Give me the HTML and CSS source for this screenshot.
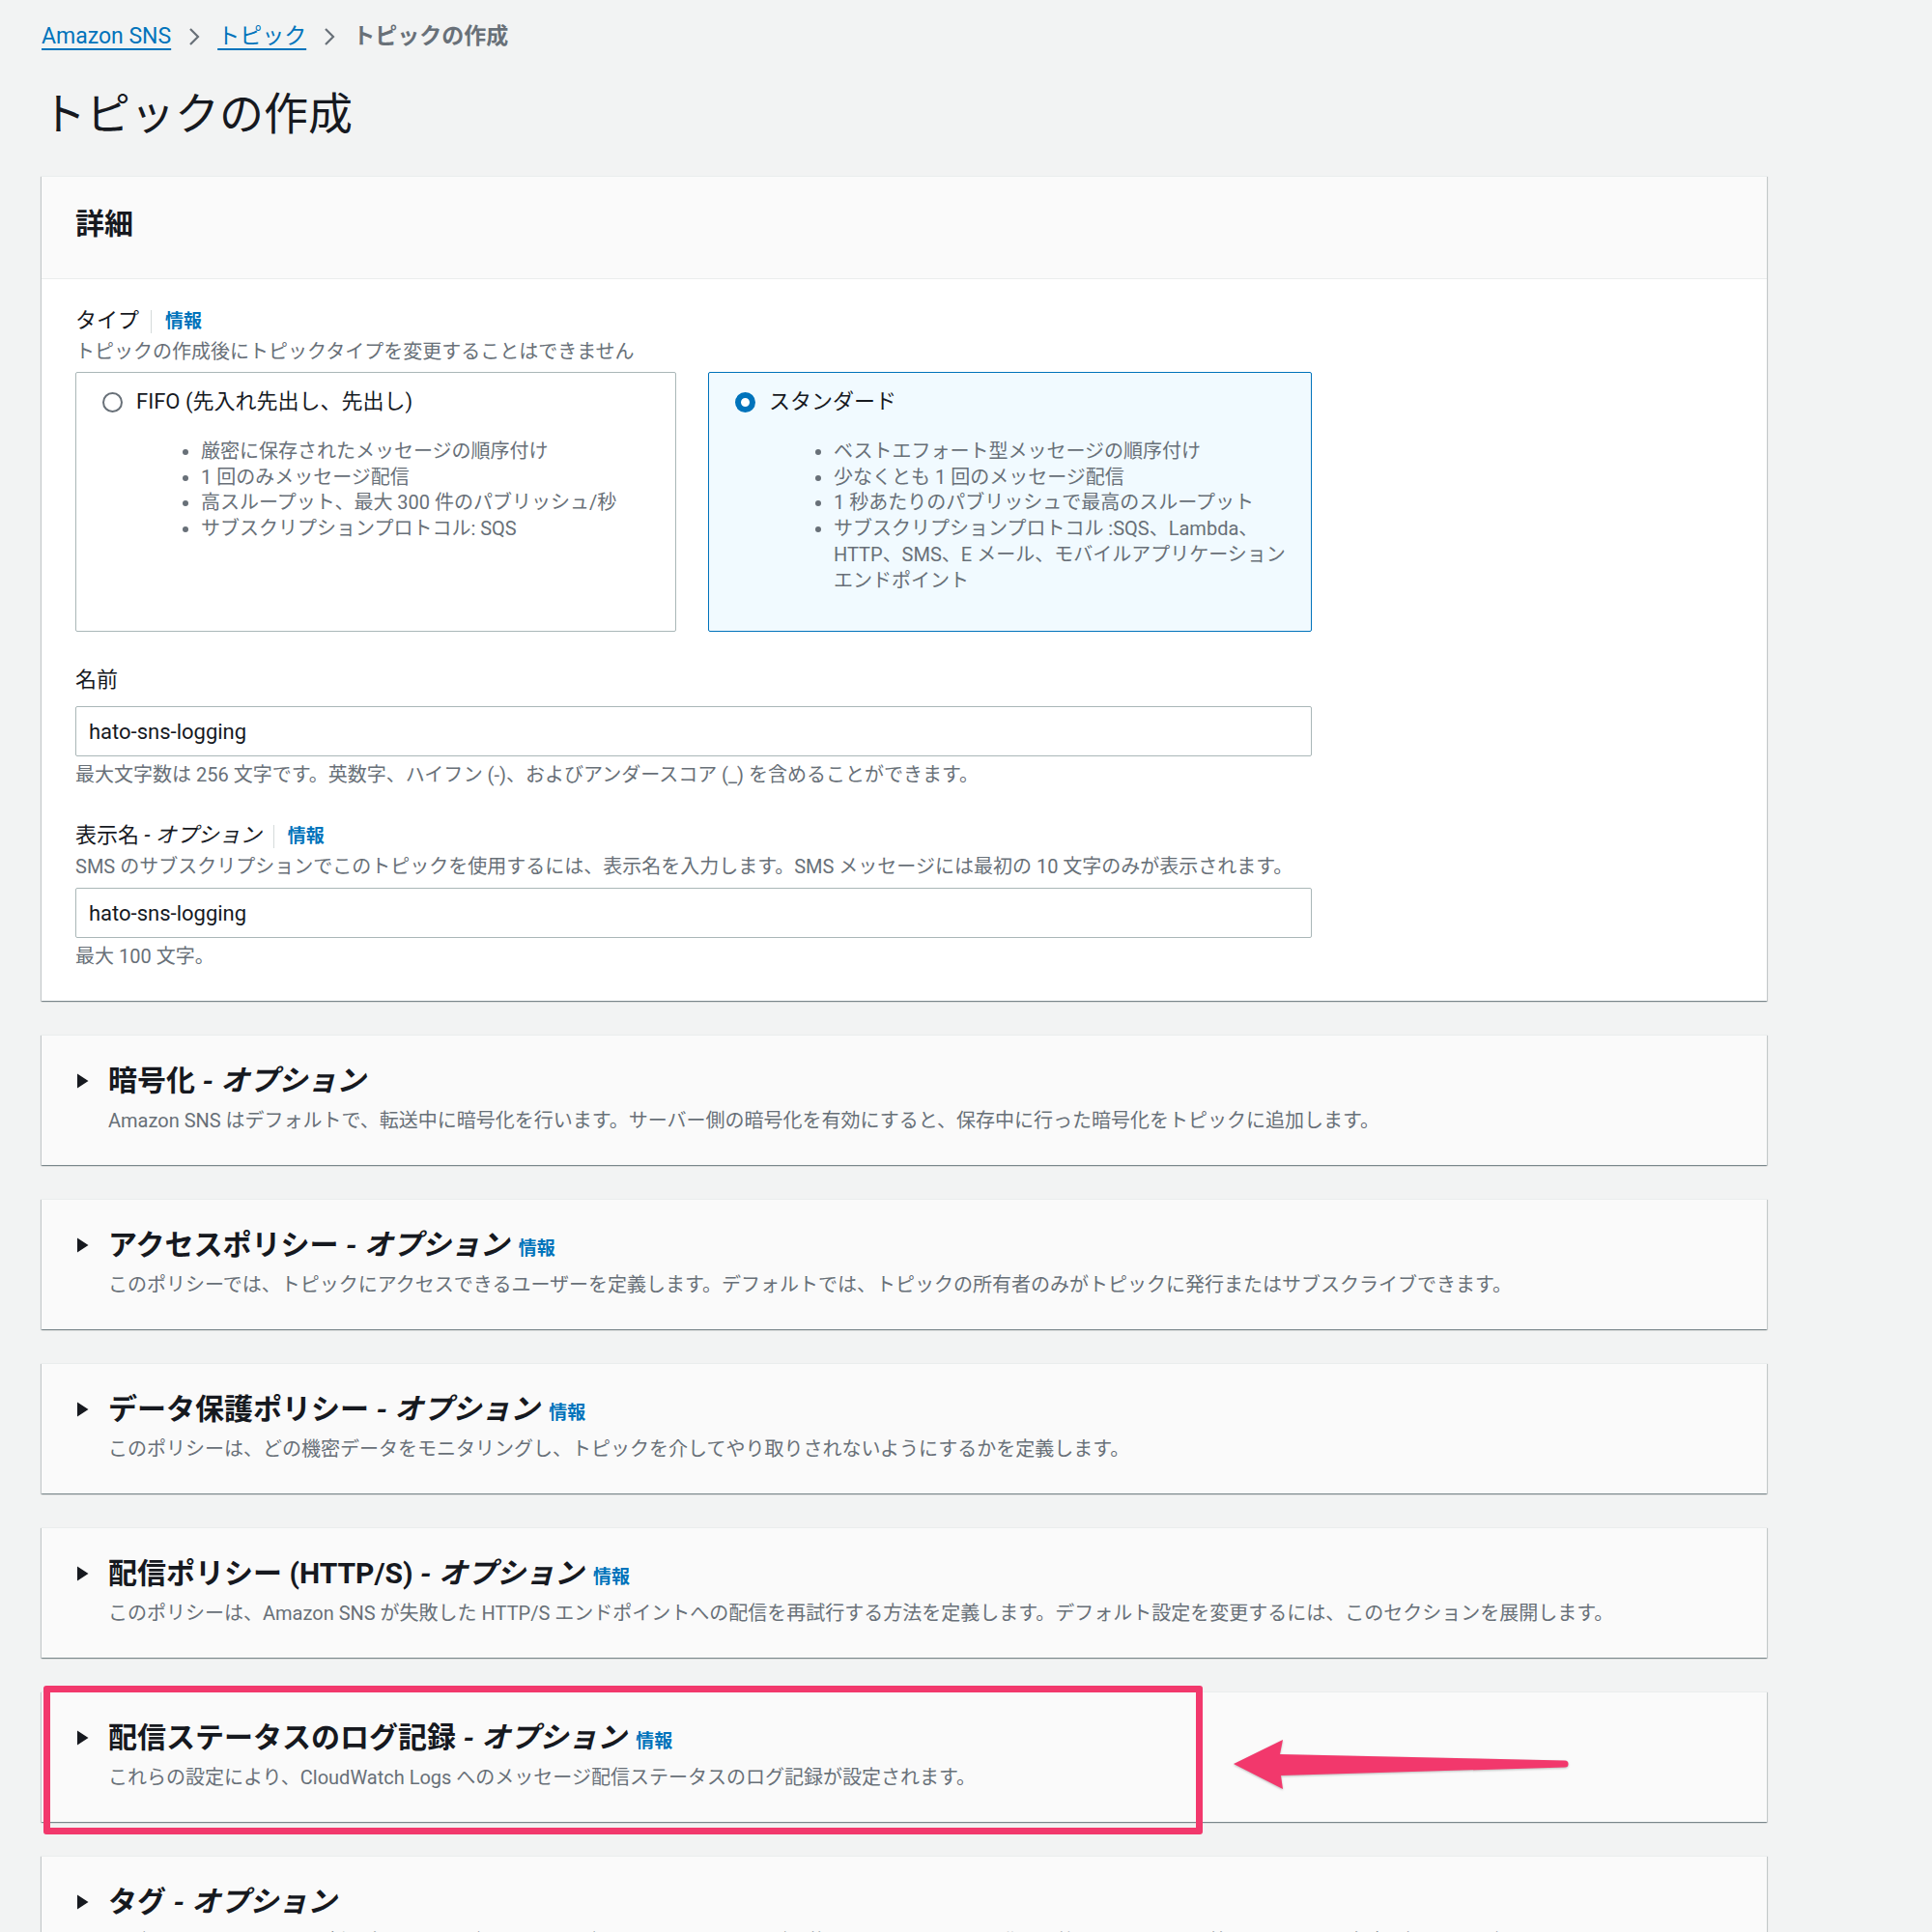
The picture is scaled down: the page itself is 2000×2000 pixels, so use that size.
FILE: index.html
```html
<!DOCTYPE html>
<html lang="ja">
<head>
<meta charset="utf-8">
<title>トピックの作成</title>
<link rel="stylesheet" href="styles.css">
</head>
<body>
<div class="page">
  <nav class="crumbs">
    <a class="crumb-link" href="#">Amazon SNS</a>
    <svg class="chev" width="12" height="20" viewBox="0 0 12 20"><polyline points="2,2 10,10 2,18" fill="none" stroke="#687078" stroke-width="2.2"/></svg>
    <a class="crumb-link" href="#">トピック</a>
    <svg class="chev" width="12" height="20" viewBox="0 0 12 20"><polyline points="2,2 10,10 2,18" fill="none" stroke="#687078" stroke-width="2.2"/></svg>
    <span class="crumb-current">トピックの作成</span>
  </nav>

  <h1 class="page-title">トピックの作成</h1>

  <section class="panel">
    <header class="panel-head"><h2>詳細</h2></header>
    <div class="panel-body">
      <div class="label-row"><span class="label">タイプ</span><a class="info" href="#">情報</a></div>
      <div class="desc">トピックの作成後にトピックタイプを変更することはできません</div>
      <div class="tiles">
        <div class="tile">
          <div class="tile-head"><span class="radio"></span><span class="tile-title">FIFO (先入れ先出し、先出し)</span></div>
          <ul class="tile-list">
            <li>厳密に保存されたメッセージの順序付け</li>
            <li>1 回のみメッセージ配信</li>
            <li>高スループット、最大 300 件のパブリッシュ/秒</li>
            <li>サブスクリプションプロトコル: SQS</li>
          </ul>
        </div>
        <div class="tile tile-selected">
          <div class="tile-head"><span class="radio radio-on"></span><span class="tile-title">スタンダード</span></div>
          <ul class="tile-list">
            <li>ベストエフォート型メッセージの順序付け</li>
            <li>少なくとも 1 回のメッセージ配信</li>
            <li>1 秒あたりのパブリッシュで最高のスループット</li>
            <li>サブスクリプションプロトコル :SQS、Lambda、<br>HTTP、SMS、E メール、モバイルアプリケーション<br>エンドポイント</li>
          </ul>
        </div>
      </div>

      <div class="label-row gap-top"><span class="label">名前</span></div>
      <div class="input">hato-sns-logging</div>
      <div class="hint">最大文字数は 256 文字です。英数字、ハイフン (-)、およびアンダースコア (_) を含めることができます。</div>

      <div class="label-row gap-top"><span class="label">表示名 <i>- オプション</i></span><a class="info" href="#">情報</a></div>
      <div class="desc desc-tight">SMS のサブスクリプションでこのトピックを使用するには、表示名を入力します。SMS メッセージには最初の 10 文字のみが表示されます。</div>
      <div class="input input-2">hato-sns-logging</div>
      <div class="hint">最大 100 文字。</div>
    </div>
  </section>

  <section class="exp">
    <svg class="caret" width="13" height="16" viewBox="0 0 13 16"><polygon points="1,0.5 12.5,8 1,15.5" fill="#16191f"/></svg>
    <div class="exp-head"><h3>暗号化 <i>- オプション</i></h3></div>
    <p class="exp-desc">Amazon SNS はデフォルトで、転送中に暗号化を行います。サーバー側の暗号化を有効にすると、保存中に行った暗号化をトピックに追加します。</p>
  </section>

  <section class="exp">
    <svg class="caret" width="13" height="16" viewBox="0 0 13 16"><polygon points="1,0.5 12.5,8 1,15.5" fill="#16191f"/></svg>
    <div class="exp-head"><h3>アクセスポリシー <i>- オプション</i></h3><a class="info info-h" href="#">情報</a></div>
    <p class="exp-desc">このポリシーでは、トピックにアクセスできるユーザーを定義します。デフォルトでは、トピックの所有者のみがトピックに発行またはサブスクライブできます。</p>
  </section>

  <section class="exp">
    <svg class="caret" width="13" height="16" viewBox="0 0 13 16"><polygon points="1,0.5 12.5,8 1,15.5" fill="#16191f"/></svg>
    <div class="exp-head"><h3>データ保護ポリシー <i>- オプション</i></h3><a class="info info-h" href="#">情報</a></div>
    <p class="exp-desc">このポリシーは、どの機密データをモニタリングし、トピックを介してやり取りされないようにするかを定義します。</p>
  </section>

  <section class="exp">
    <svg class="caret" width="13" height="16" viewBox="0 0 13 16"><polygon points="1,0.5 12.5,8 1,15.5" fill="#16191f"/></svg>
    <div class="exp-head"><h3>配信ポリシー (HTTP/S) <i>- オプション</i></h3><a class="info info-h" href="#">情報</a></div>
    <p class="exp-desc">このポリシーは、Amazon SNS が失敗した HTTP/S エンドポイントへの配信を再試行する方法を定義します。デフォルト設定を変更するには、このセクションを展開します。</p>
  </section>

  <section class="exp exp-marked">
    <svg class="caret" width="13" height="16" viewBox="0 0 13 16"><polygon points="1,0.5 12.5,8 1,15.5" fill="#16191f"/></svg>
    <div class="exp-head"><h3>配信ステータスのログ記録 <i>- オプション</i></h3><a class="info info-h" href="#">情報</a></div>
    <p class="exp-desc">これらの設定により、CloudWatch Logs へのメッセージ配信ステータスのログ記録が設定されます。</p>
    <div class="highlight"></div>
    <svg class="arrow" width="360" height="62" viewBox="0 0 360 62"><path d="M4 29 L55 4 L52 19 L347 25.5 A3.5 3.5 0 0 1 347 32.5 L53 41 L55 55 Z" fill="#f2386c"/></svg>
  </section>

  <section class="exp">
    <svg class="caret" width="13" height="16" viewBox="0 0 13 16"><polygon points="1,0.5 12.5,8 1,15.5" fill="#16191f"/></svg>
    <div class="exp-head"><h3>タグ <i>- オプション</i></h3></div>
    <p class="exp-desc">タグは、AWS リソースに割り当てることができるメタデータラベルです。タグを使用して、リソースの識別と整理、アクセスの管理、コストの追跡を行うことができます。</p>
  </section>
</div>
</body>
</html>
```

FILE: styles.css
```css
* { box-sizing: border-box; }

html, body {
  margin: 0;
  padding: 0;
  background: #f2f3f3;
}

body {
  font-family: Roboto, "Noto Sans CJK JP", sans-serif;
  color: #16191f;
}

.page {
  width: 1829px;
  padding-left: 43px;
  padding-bottom: 40px;
}

/* breadcrumbs */
.crumbs {
  display: flex;
  align-items: center;
  padding-top: 23px;
  height: 53px;
  font-size: 23px;
  line-height: 30px;
}
.crumb-link {
  color: #0073bb;
  text-decoration: underline;
  text-underline-offset: 5px;
  text-decoration-thickness: 2px;
}
.chev { margin: 0 18px; flex: none; }
.crumb-current {
  color: #687078;
  font-weight: 700;
}

.page-title {
  margin: 37px 0 36px;
  font-size: 46px;
  line-height: 56px;
  font-weight: 400;
}

/* main panel */
.panel {
  background: #fff;
  border-top: 1px solid #eaeded;
  box-shadow: 0 1px 1px 0 rgba(0, 28, 36, .3), 1px 1px 1px 0 rgba(0, 28, 36, .15), -1px 1px 1px 0 rgba(0, 28, 36, .15);
}
.panel-head {
  background: #fafafa;
  border-bottom: 1px solid #eaeded;
  padding: 31px 35px 38px;
}
.panel-head h2 {
  margin: 0;
  font-size: 30px;
  line-height: 36px;
  font-weight: 700;
}
.panel-body {
  padding: 28px 35px 33px;
}

.label-row {
  display: flex;
  align-items: baseline;
  font-size: 22px;
  line-height: 30px;
}
.gap-top { margin-top: 35px; }
.label { color: #16191f; }
.info {
  color: #0073bb;
  font-weight: 700;
  font-size: 19px;
  text-decoration: none;
  margin-left: 12px;
  padding-left: 14px;
  border-left: 1px solid #d5dbdb;
  line-height: 24px;
}
.desc {
  font-size: 20px;
  line-height: 28px;
  color: #687078;
  margin-top: 3px;
}
.desc-tight { margin-top: 4px; line-height: 26px; }

.tiles {
  display: grid;
  grid-template-columns: 622px 625px;
  column-gap: 33px;
  margin-top: 7px;
}
.tile {
  height: 269px;
  border: 1px solid #aab7b8;
  border-radius: 2px;
  padding: 15px 20px 0 27px;
  background: #fff;
}
.tile-selected {
  background: #f1faff;
  border-color: #0073bb;
}
.tile-head {
  display: flex;
  align-items: center;
  font-size: 22px;
  line-height: 30px;
}
.radio {
  width: 21px;
  height: 21px;
  border-radius: 50%;
  border: 2px solid #687078;
  background: #fff;
  margin-right: 14px;
  flex: none;
}
.radio-on {
  border: 6px solid #0073bb;
}
.tile-list {
  margin: 23px 0 0;
  padding-left: 102px;
  font-size: 20px;
  line-height: 26.7px;
  color: #687078;
}

.input {
  margin-top: 12px;
  height: 52px;
  border: 1px solid #aab7b8;
  border-radius: 2px;
  padding: 0 13px;
  display: flex;
  align-items: center;
  font-size: 22px;
  color: #16191f;
  background: #fff;
  width: 1280px;
}
.input-2 { margin-top: 9px; }
.hint {
  margin-top: 6px;
  font-size: 20px;
  line-height: 26px;
  color: #687078;
}

/* expandable sections */
.exp {
  position: relative;
  margin-top: 35px;
  height: 135px;
  background: #fafafa;
  border-top: 1px solid #eaeded;
  box-shadow: 0 1px 1px 0 rgba(0, 28, 36, .3), 1px 1px 1px 0 rgba(0, 28, 36, .15), -1px 1px 1px 0 rgba(0, 28, 36, .15);
  padding: 29px 30px 0 36px;
  display: grid;
  grid-template-columns: 33px 1fr;
  grid-template-rows: 36px 26px;
  row-gap: 10px;
  align-content: start;
  align-items: center;
}
.exp:first-of-type { margin-top: 36px; }
.caret { grid-column: 1; grid-row: 1; }
.exp-head {
  grid-column: 2;
  grid-row: 1;
  display: flex;
  align-items: baseline;
}
.exp-head h3 {
  margin: 0;
  font-size: 30px;
  line-height: 36px;
  font-weight: 700;
}
.info-h {
  border-left: none;
  margin-left: 10px;
  padding-left: 0;
}
.exp-desc {
  grid-column: 2;
  grid-row: 2;
  margin: 0;
  font-size: 20px;
  line-height: 26px;
  color: #687078;
}

/* annotation overlay */
.highlight {
  position: absolute;
  left: 2px;
  top: -7px;
  width: 1200px;
  height: 154px;
  border: 7px solid #f2386c;
  border-radius: 3px;
  pointer-events: none;
}
.arrow {
  position: absolute;
  left: 1230px;
  top: 45px;
  filter: drop-shadow(0 1px 1px rgba(0, 0, 0, .25));
}
```
